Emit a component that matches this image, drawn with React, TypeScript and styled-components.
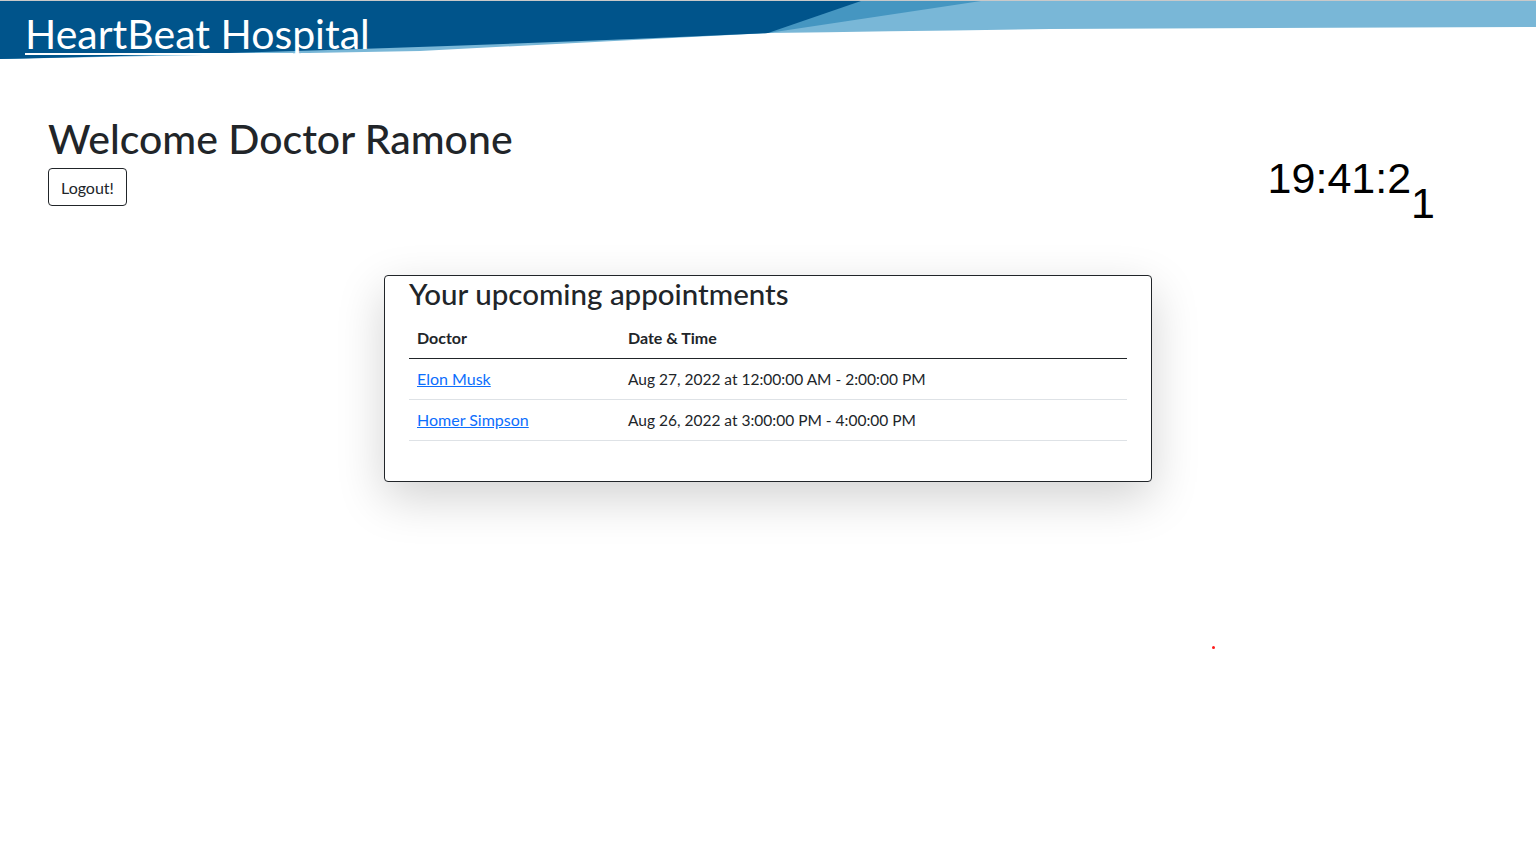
import React from 'react';
import styled, { createGlobalStyle } from 'styled-components';

const GlobalStyle = createGlobalStyle`
    html, body, #root {
        margin: 0;
        padding: 0;
        min-height: 100%;
        height: 100%;
        background: #fff;
    }
    body {
        font-family: Lato, "Noto Sans", sans-serif;
        color: #212529;
    }
`;

const Page = styled.div`
    position: relative;
    min-height: 100vh;
`;

const Header = styled.header`
    position: relative;
    height: 60px;
    border-top: 1px solid #c9c9c9;
    box-sizing: border-box;
`;

const HeaderWave = styled.svg`
    position: absolute;
    inset: 0;
    width: 100%;
    height: 100%;
    display: block;
`;

const Brand = styled.a`
    position: relative;
    display: inline-block;
    margin: 12px 0 0 25px;
    color: #fff;
    font-size: 41px;
    line-height: 1;
    text-decoration: underline;
    text-decoration-thickness: 2px;
    text-underline-offset: 4px;
`;

const Main = styled.main`
    padding: 0 48px;
`;

const TopRow = styled.div`
    display: flex;
    justify-content: space-between;
    align-items: flex-start;
    padding-top: 54px;
`;

const Welcome = styled.h1`
    margin: 0 0 5px;
    font-size: 41px;
    font-weight: 500;
    line-height: 1.2;
`;

const LogoutButton = styled.button`
    font-family: inherit;
    font-size: 16px;
    color: #212529;
    background: #fff;
    border: 1px solid #212529;
    border-radius: 4px;
    padding: 0 12px;
    height: 38px;
    cursor: pointer;
`;

const Clock = styled.div`
    font-family: "Liberation Sans", Arial, sans-serif;
    font-size: 43px;
    line-height: 1;
    color: #000;
    margin: 43px 53px 0 0;
    white-space: nowrap;
`;

const ClockTail = styled.span`
    display: inline-block;
    transform: translateY(25px);
`;

const Card = styled.section`
    width: 768px;
    box-sizing: border-box;
    margin: 69px auto 0;
    padding: 0 24px 24px;
    border: 1px solid #212529;
    border-radius: 4px;
    box-shadow: 0 16px 48px rgba(0, 0, 0, 0.18);
    background: #fff;
`;

const CardTitle = styled.h3`
    margin: 0 0 6px;
    font-size: 29.5px;
    font-weight: 500;
    line-height: 1.2;
`;

const Table = styled.table`
    width: 100%;
    border-collapse: collapse;
    margin-bottom: 16px;
    font-size: 15.5px;
`;

const Th = styled.th<{ $w?: number }>`
    text-align: left;
    font-weight: 700;
    font-size: 16px;
    padding: 8px;
    line-height: 24px;
    border-bottom: 1px solid #212529;
    width: ${(p) => (p.$w ? `${p.$w}px` : 'auto')};
`;

const Td = styled.td`
    padding: 8px;
    line-height: 24px;
    border-bottom: 1px solid #dee2e6;
`;

const DoctorLink = styled.a`
    color: #0d6efd;
    font-size: 16px;
    text-decoration: underline;
`;

const Dot = styled.span`
    position: absolute;
    left: 1212px;
    top: 646px;
    width: 3px;
    height: 3px;
    border-radius: 50%;
    background: #ff1a1a;
`;

const appointments = [
    { doctor: 'Elon Musk', when: 'Aug 27, 2022 at 12:00:00 AM - 2:00:00 PM' },
    { doctor: 'Homer Simpson', when: 'Aug 26, 2022 at 3:00:00 PM - 4:00:00 PM' },
];

export default function App() {
    return (
        <Page>
            <GlobalStyle />
            <Header>
                <HeaderWave viewBox="0 0 1536 59" preserveAspectRatio="none">
                    <path d="M0 0 H1536 V26 L1050 28 Q900 30 768 32 L420 50 Q200 54 0 58 Z" fill="#79b7d7" />
                    <path d="M0 0 H981 L768 32 Q500 40 0 58 Z" fill="#4596c1" />
                    <path d="M0 0 H861 L768 32 Q420 48 0 58 Z" fill="#00548b" />
                </HeaderWave>
                <Brand href="#">HeartBeat Hospital</Brand>
            </Header>
            <Main>
                <TopRow>
                    <div>
                        <Welcome>Welcome Doctor Ramone</Welcome>
                        <LogoutButton>Logout!</LogoutButton>
                    </div>
                    <Clock>
                        19:41:2<ClockTail>1</ClockTail>
                    </Clock>
                </TopRow>
                <Card>
                    <CardTitle>Your upcoming appointments</CardTitle>
                    <Table>
                        <thead>
                            <tr>
                                <Th $w={195}>Doctor</Th>
                                <Th>Date &amp; Time</Th>
                            </tr>
                        </thead>
                        <tbody>
                            {appointments.map((a) => (
                                <tr key={a.doctor}>
                                    <Td>
                                        <DoctorLink href="#">{a.doctor}</DoctorLink>
                                    </Td>
                                    <Td>{a.when}</Td>
                                </tr>
                            ))}
                        </tbody>
                    </Table>
                </Card>
            </Main>
            <Dot />
        </Page>
    );
}
